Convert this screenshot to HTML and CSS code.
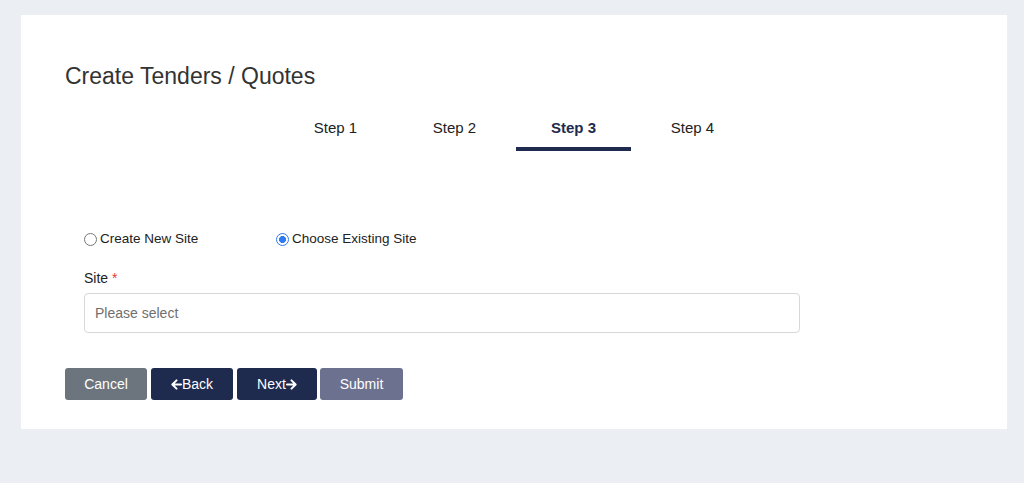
FILE: index.html
```html
<!DOCTYPE html>
<html lang="en">
<head>
<meta charset="utf-8">
<title>Create Tenders / Quotes</title>
<link rel="stylesheet" href="styles.css">
</head>
<body>
<div class="page">
  <div class="card">
    <h1 class="title">Create Tenders / Quotes</h1>
    <div class="tabs">
      <div class="tab">Step 1</div>
      <div class="tab">Step 2</div>
      <div class="tab active">Step 3</div>
      <div class="tab">Step 4</div>
    </div>
    <div class="form">
      <div class="radios">
        <label class="radio first"><input type="radio" name="site"><span>Create New Site</span></label>
        <label class="radio"><input type="radio" name="site" checked><span>Choose Existing Site</span></label>
      </div>
      <div class="field-label">Site <span class="req">*</span></div>
      <div class="select">Please select</div>
    </div>
    <div class="actions">
      <button class="btn btn-gray btn-cancel">Cancel</button>
      <button class="btn btn-navy btn-back"><svg class="arrow" viewBox="0 0 12 12" width="11" height="11"><path d="M11 6H2M6 1.5L1.5 6L6 10.5" fill="none" stroke="#fff" stroke-width="2.2" stroke-linecap="round" stroke-linejoin="round"/></svg>Back</button>
      <button class="btn btn-navy btn-next">Next<svg class="arrow" viewBox="0 0 12 12" width="11" height="11"><path d="M1 6H10M6 1.5L10.5 6L6 10.5" fill="none" stroke="#fff" stroke-width="2.2" stroke-linecap="round" stroke-linejoin="round"/></svg></button>
      <button class="btn btn-faded btn-submit">Submit</button>
    </div>
  </div>
</div>
</body>
</html>
```
FILE: styles.css
```css
html, body {
  margin: 0;
  padding: 0;
  background: #ebeef3;
  font-family: "Liberation Sans", Arial, sans-serif;
  color: #333;
}
.page {
  padding: 15px 17px 0 21px;
}
.card {
  background: #fff;
  height: 414px;
  box-sizing: border-box;
  padding: 47px 44px 0 44px;
}
.title {
  margin: 0;
  font-size: 23px;
  line-height: 28px;
  font-weight: normal;
  color: #333;
}
.tabs {
  display: flex;
  justify-content: center;
  gap: 4px;
  margin-top: 28px;
}
.tab {
  width: 115px;
  text-align: center;
  font-size: 15px;
  line-height: 20px;
  color: #222;
  padding-bottom: 9px;
  border-bottom: 4px solid transparent;
}
.tab.active {
  font-weight: bold;
  color: #1e2a4e;
  border-bottom-color: #1e2a4e;
}
.form {
  padding-left: 19px;
  width: 716px;
}
.radios {
  display: flex;
  margin-top: 78px;
  height: 20px;
  align-items: center;
}
.radio {
  display: flex;
  align-items: center;
  font-size: 13.5px;
  line-height: 20px;
  color: #222;
}
.radio.first {
  width: 192px;
}
.radio input {
  appearance: none;
  -webkit-appearance: none;
  margin: 0 3px 0 0;
  width: 13px;
  height: 13px;
  border-radius: 50%;
  border: 1px solid #777;
  box-sizing: border-box;
  background: #fff;
}
.radio input:checked {
  border: 1.5px solid #2f7bf5;
  background: radial-gradient(circle, #2f7bf5 0 3.2px, #fff 3.8px);
}
.field-label {
  margin-top: 19px;
  font-size: 14px;
  line-height: 20px;
  color: #222;
}
.req {
  color: #e53935;
}
.select {
  margin-top: 5px;
  height: 40px;
  box-sizing: border-box;
  border: 1px solid #d6d8db;
  border-radius: 4px;
  padding-left: 10px;
  font-size: 14px;
  line-height: 38px;
  color: #6f6f6f;
}
.actions {
  display: flex;
  gap: 4px;
  margin-top: 35px;
}
.btn {
  height: 32px;
  border: none;
  border-radius: 3px;
  padding: 0;
  font-family: "Liberation Sans", Arial, sans-serif;
  font-size: 14px;
  color: #fff;
  display: flex;
  align-items: center;
  justify-content: center;
}
.btn-cancel { width: 82px; }
.btn-back { width: 82px; }
.btn-next { width: 80px; }
.btn-submit { width: 83px; margin-left: -1px; }
.btn-gray { background: #6c757d; }
.btn-navy { background: #1e2a4e; }
.btn-faded { background: #6c7190; }
.arrow { display: block; }
```
